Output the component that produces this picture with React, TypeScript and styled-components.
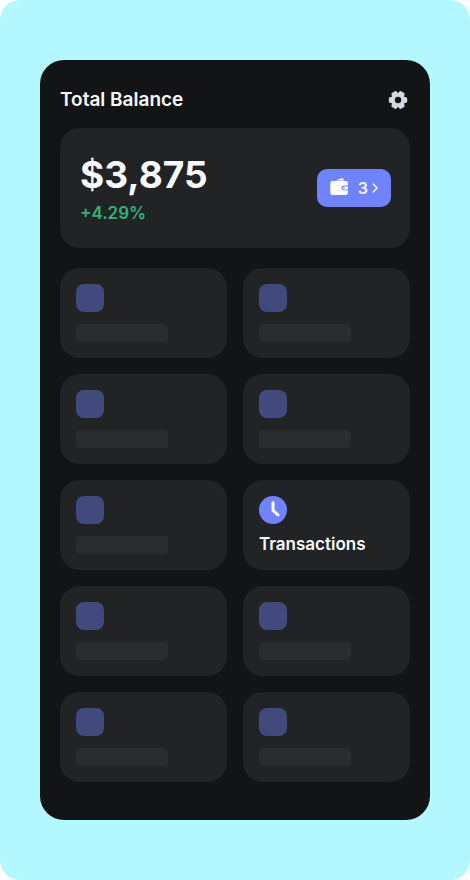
import React from "react";
import styled, { createGlobalStyle } from "styled-components";

const GlobalStyle = createGlobalStyle`
  *, *::before, *::after { box-sizing: border-box; }
  body { margin: 0; background: #ffffff; }
  button { font: inherit; color: inherit; border: 0; cursor: pointer; }
`;

const Page = styled.div`
  min-height: 100vh;
  padding: 60px 40px;
  border-radius: 20px;
  background: #b4f8ff;
  color: #f8fafd;
  font-family: Inter, "Liberation Sans", sans-serif;
`;

const Panel = styled.main`
  display: flex;
  flex-direction: column;
  min-height: calc(100vh - 120px);
  padding: 24px 20px 38px;
  border-radius: 24px;
  background: #131416;
`;

const Header = styled.header`
  display: flex;
  align-items: center;
  justify-content: space-between;
  height: 32px;
  margin-bottom: 12px;
`;

const Title = styled.h1`
  margin: 0;
  font-size: 19px;
  font-weight: 600;
  line-height: 24px;
`;

const IconButton = styled.button`
  display: flex;
  padding: 2px;
  background: none;
`;

const BalanceCard = styled.section`
  display: flex;
  align-items: center;
  justify-content: space-between;
  min-height: 120px;
  margin-bottom: 20px;
  padding: 20px;
  border-radius: 20px;
  background: #222325;
`;

const Amount = styled.p`
  margin: 0;
  font-size: 37px;
  font-weight: 700;
  line-height: 48px;
`;

const Change = styled.p`
  margin: 2px 0 0;
  color: #2bb67d;
  font-size: 17px;
  font-weight: 600;
  line-height: 24px;
`;

const WalletButton = styled.button`
  display: flex;
  align-items: center;
  height: 38px;
  margin-right: -1px;
  padding: 0 12px;
  border-radius: 10px;
  background: #7083ff;
  font-size: 16px;
  font-weight: 600;
`;

const WalletCount = styled.span`
  margin: 0 3px 0 9px;
`;

const Grid = styled.div`
  display: grid;
  grid-template-columns: 1fr 1fr;
  gap: 16px;
`;

const Tile = styled.button`
  display: flex;
  flex-direction: column;
  align-items: flex-start;
  min-height: 90px;
  padding: 16px;
  border-radius: 20px;
  background: #222325;
  text-align: left;
`;

const TileLabel = styled.span`
  margin-top: 10px;
  font-size: 17px;
  font-weight: 600;
  line-height: 20px;
`;

const PlaceholderIcon = styled.span`
  width: 28px;
  height: 28px;
  border-radius: 8px;
  background: #424a7d;
`;

const PlaceholderLabel = styled.span`
  width: 92px;
  height: 18px;
  margin-top: 12px;
  border-radius: 4px;
  background: #2b2c2e;
`;

const GearIcon = () => (
  <svg width="20" height="20" viewBox="0 0 20 20" aria-hidden="true">
    <g fill="#d5d9e2">
      <circle cx="10" cy="10" r="7.2" />
      {[0, 60, 120].map((angle) => (
        <rect
          key={angle}
          x="0.8"
          y="6.9"
          width="18.4"
          height="6.2"
          rx="1.8"
          transform={`rotate(${angle} 10 10)`}
        />
      ))}
    </g>
    <circle cx="10" cy="10" r="3.2" fill="#131416" />
  </svg>
);

const WalletIcon = () => (
  <svg width="20" height="20" viewBox="0 0 20 20" aria-hidden="true">
    <path fill="#fff" d="M6.8 2.4 12.4.2Q13.6-.2 14.2.9L15 2.4Z" />
    <rect x="1.3" y="2.9" width="17.6" height="14" rx="2" fill="#fff" />
    <path fill="#7083ff" d="M20 7.6H14.6a2.3 2.3 0 0 0 0 4.6H20Z" />
    <rect x="13.4" y="8.4" width="5.8" height="3" rx="1.4" fill="#fff" />
    <circle cx="14.9" cy="9.9" r=".8" fill="#7083ff" />
  </svg>
);

const ChevronIcon = () => (
  <svg width="8" height="12" viewBox="0 0 8 12" aria-hidden="true">
    <path d="M2.3 2 6 6 2.3 10" fill="none" stroke="#fff" strokeWidth="1.4" strokeLinecap="round" strokeLinejoin="round" />
  </svg>
);

const ClockIcon = () => (
  <svg width="28" height="28" viewBox="0 0 28 28" aria-hidden="true">
    <circle cx="14" cy="14" r="14" fill="#7083ff" />
    <path d="M14 6.7V14.4L19 19" fill="none" stroke="#fff" strokeWidth="3" strokeLinecap="round" strokeLinejoin="round" />
  </svg>
);

const tiles: { label?: string }[] = [
  {}, {}, {}, {}, {}, { label: "Transactions" }, {}, {}, {}, {},
];

export default function App() {
  return (
    <>
      <GlobalStyle />
      <Page>
        <Panel>
          <Header>
            <Title>Total Balance</Title>
            <IconButton type="button" aria-label="Settings"><GearIcon /></IconButton>
          </Header>
          <BalanceCard>
            <div>
              <Amount>$3,875</Amount>
              <Change>+4.29%</Change>
            </div>
            <WalletButton type="button" aria-label="3 wallets">
              <WalletIcon />
              <WalletCount>3</WalletCount>
              <ChevronIcon />
            </WalletButton>
          </BalanceCard>
          <Grid>
            {tiles.map((tile, index) =>
              tile.label ? (
                <Tile key={index} type="button">
                  <ClockIcon />
                  <TileLabel>{tile.label}</TileLabel>
                </Tile>
              ) : (
                <Tile key={index} as="div" aria-hidden="true">
                  <PlaceholderIcon />
                  <PlaceholderLabel />
                </Tile>
              )
            )}
          </Grid>
        </Panel>
      </Page>
    </>
  );
}
